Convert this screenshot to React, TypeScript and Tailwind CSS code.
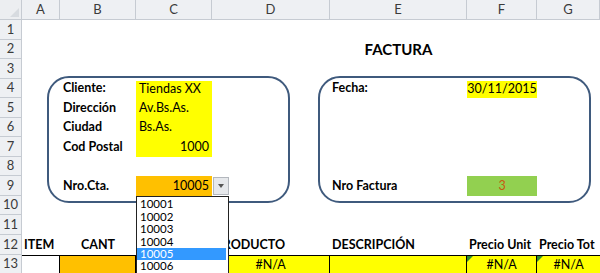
import React from 'react';

const COLS = ['A', 'B', 'C', 'D', 'E', 'F', 'G'];
const ROWS = Array.from({ length: 13 }, (_, i) => i + 1);

type Cell = { text?: string; cls?: string; tri?: boolean };

// cell contents, keyed like Excel refs
const CELLS: Record<string, Cell> = {
  E2: { text: 'FACTURA', cls: 'justify-center font-bold text-[15px]' },
  B4: { text: 'Cliente:', cls: 'font-bold pl-[3px]' },
  C4: { text: 'Tiendas XX', cls: 'bg-[#ffff00] pl-[3px] mt-[2px]' },
  F4: { text: '30/11/2015', cls: 'bg-[#ffff00] justify-center mt-[2px]' },
  E4: { text: 'Fecha:', cls: 'font-bold pl-[2px]' },
  B5: { text: 'Dirección', cls: 'font-bold pl-[3px]' },
  C5: { text: 'Av.Bs.As.', cls: 'bg-[#ffff00] pl-[3px]' },
  B6: { text: 'Ciudad', cls: 'font-bold pl-[3px]' },
  C6: { text: 'Bs.As.', cls: 'bg-[#ffff00] pl-[3px]' },
  B7: { text: 'Cod Postal', cls: 'font-bold pl-[3px]' },
  C7: { text: '1000', cls: 'bg-[#ffff00] justify-end pr-[3px]' },
  B9: { text: 'Nro.Cta.', cls: 'font-bold pl-[3px]' },
  C9: { text: '10005', cls: 'bg-[#ffc000] justify-end pr-[3px]' },
  E9: { text: 'Nro Factura', cls: 'font-bold pl-[2px]' },
  F9: { text: '3', cls: 'bg-[#92d050] justify-center text-[#c65911]' },
  A12: { text: 'ITEM', cls: 'font-bold pl-[2px]' },
  B12: { text: 'CANT', cls: 'font-bold justify-center' },
  D12: { text: 'PRODUCTO', cls: 'font-bold pl-[3px]' },
  E12: { text: 'DESCRIPCIÓN', cls: 'font-bold pl-[2px]' },
  F12: { text: 'Precio Unit', cls: 'font-bold pl-[2px]' },
  G12: { text: 'Precio Tot', cls: 'font-bold pl-[2px] whitespace-nowrap' },
  A13: { cls: 'border-t border-r border-black' },
  B13: { cls: 'bg-[#ffc000] border-t border-r border-black' },
  C13: { cls: 'bg-[#ffff00] border-t border-r border-black' },
  D13: { text: '#N/A', cls: 'bg-[#ffff00] justify-center border-t border-r border-black' },
  E13: { cls: 'bg-[#ffff00] border-t border-r border-black' },
  F13: { text: '#N/A', cls: 'bg-[#ffff00] justify-center border-t border-r border-black', tri: true },
  G13: { text: '#N/A', cls: 'bg-[#ffff00] justify-center border-t border-black', tri: true },
};

const LIST = ['10001', '10002', '10003', '10004', '10005', '10006'];

export default function App() {
  return (
    <div
      className="relative w-[600px] h-[273px] overflow-hidden bg-white text-[12.5px] text-black"
      style={{ fontFamily: 'Lato, "Open Sans", sans-serif' }}
    >
      <div className="grid grid-cols-[22px_38px_76px_76px_118px_137px_70px_63px] grid-rows-[20px_repeat(13,19.55px)]">
        {/* select-all corner */}
        <div className="relative bg-[#eceef1] border-r border-b border-[#c6cbd2]">
          <div className="absolute right-[2px] bottom-[2px] w-0 h-0 border-l-[9px] border-l-transparent border-b-[9px] border-b-[#d7dbe0]" />
        </div>
        {COLS.map(c => (
          <div
            key={c}
            className="flex items-center justify-center bg-[#eef0f3] border-r border-b border-[#c6cbd2] text-[13px] text-[#3b3b3b]"
          >
            {c}
          </div>
        ))}
        {ROWS.map(r => (
          <React.Fragment key={r}>
            <div className="flex items-center justify-center bg-[#eef0f3] border-r border-b border-[#c6cbd2] text-[13px] text-[#3b3b3b]">
              {r}
            </div>
            {COLS.map(c => {
              const cell = CELLS[c + r];
              return (
                <div
                  key={c}
                  className={`relative flex items-center whitespace-nowrap leading-none ${cell?.cls ?? ''}`}
                >
                  {cell?.tri && (
                    <div className="absolute left-0 top-0 w-0 h-0 border-t-[6px] border-t-[#2e8b2e] border-r-[6px] border-r-transparent" />
                  )}
                  {cell?.text}
                </div>
              );
            })}
          </React.Fragment>
        ))}
      </div>

      {/* rounded shapes */}
      <div className="absolute left-[47px] top-[76px] w-[243px] h-[127px] rounded-[22px] border-2 border-[#3f5a7d]" />
      <div className="absolute left-[318px] top-[76px] w-[273px] h-[127px] rounded-[22px] border-2 border-[#3f5a7d]" />

      {/* validation dropdown button */}
      <div className="absolute left-[213px] top-[177px] w-[16px] h-[18px] flex items-center justify-center bg-[#e6e8eb] border border-[#b3b7bd]">
        <div className="w-0 h-0 border-l-[3.5px] border-r-[3.5px] border-t-[4px] border-l-transparent border-r-transparent border-t-[#555]" />
      </div>

      {/* open list */}
      <div className="absolute left-[136px] top-[196px] w-[93px] h-[80px] bg-white border border-[#222] pt-[1px] pr-[2px] text-[11.5px]">
        {LIST.map(v => (
          <div
            key={v}
            className={`h-[12.4px] flex items-center pl-[3px] leading-none ${v === '10005' ? 'bg-[#3399ff] text-white' : ''}`}
          >
            {v}
          </div>
        ))}
      </div>
    </div>
  );
}
